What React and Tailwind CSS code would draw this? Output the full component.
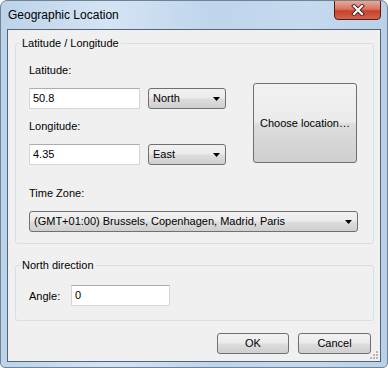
import React from 'react'

const font = "font-['Segoe_UI','Liberation_Sans',Arial,sans-serif]"
const btnBg = 'bg-[linear-gradient(#f2f2f2,#ebebeb_48%,#dddddd_52%,#cfcfcf)]'

const Arrow = () => (
  <svg width="7" height="4" viewBox="0 0 7 4" className="shrink-0">
    <path d="M0 0h7L3.5 4z" fill="#000" />
  </svg>
)

const TextBox = ({ value, className = '' }) => (
  <div className={`h-[21px] bg-white border border-[#d3d6db] border-t-[#abadb3] flex items-center px-[3px] ${className}`}>
    {value}
  </div>
)

const Combo = ({ value, className = '' }) => (
  <div className={`h-[21px] border border-[#707070] rounded-[3px] ${btnBg} flex items-center justify-between pl-[4px] pr-[5px] ${className}`}>
    <span>{value}</span>
    <Arrow />
  </div>
)

const Button = ({ children, className = '' }) => (
  <button className={`border border-[#707070] rounded-[3px] ${btnBg} text-black ${className}`}>{children}</button>
)

const Group = ({ title, className = '', children }) => (
  <fieldset className={`ml-[7px] w-[359px] border border-[#d5dfe5] rounded-[3px] px-[4px] ${className}`}>
    <legend className="px-[2px] leading-[14px]">{title}</legend>
    {children}
  </fieldset>
)

export default function App() {
  return (
    <div className={`${font} text-[11px] text-black w-[388px] h-[368px] flex flex-col rounded-t-[7px] rounded-b-[5px] border border-[#6f8296] bg-[linear-gradient(90deg,#bcd3ea,#d4e4f4_28%,#bfd5ec_55%,#c6daef_80%,#b9d0e8)] overflow-hidden`}>
      {/* Title bar */}
      <div className="h-[28px] flex justify-between shrink-0">
        <span className="pl-[7px] pt-[7px] leading-[14px] text-[12px]">Geographic Location</span>
        <div className="mr-[6px] -mt-px w-[47px] h-[20px] rounded-b-[4px] border border-[#5a1a10] bg-[linear-gradient(#eaa899,#d77561_45%,#c4432d_55%,#d4634a)] flex items-center justify-center">
          <svg width="14" height="12" viewBox="0 0 14 12">
            <path d="M3 2l8 8M11 2l-8 8" stroke="#4a2a28" strokeWidth="4" strokeLinecap="square" />
            <path d="M3 2l8 8M11 2l-8 8" stroke="#fff" strokeWidth="2" strokeLinecap="square" />
          </svg>
        </div>
      </div>

      {/* Client area */}
      <div className="relative mx-[6px] h-[333px] border border-[#54657a] bg-[#f0f0f0] flex flex-col">
        <Group title="Latitude / Longitude" className="mt-[6px] pb-[11px]">
          <div className="px-[9px] pt-[13px]">
            <div className="flex">
              <div className="flex flex-col w-[197px]">
                <span className="leading-[14px]">Latitude:</span>
                <div className="mt-[11px] flex gap-[8px]">
                  <TextBox value="50.8" className="w-[111px]" />
                  <Combo value="North" className="w-[78px]" />
                </div>
                <span className="mt-[10px] leading-[14px]">Longitude:</span>
                <div className="mt-[11px] flex gap-[8px]">
                  <TextBox value="4.35" className="w-[111px]" />
                  <Combo value="East" className="w-[78px]" />
                </div>
              </div>
              <Button className="ml-[27px] mt-[20px] w-[104px] h-[80px]">Choose location…</Button>
            </div>
            <div className="mt-[21px] leading-[14px]">Time Zone:</div>
            <Combo value="(GMT+01:00) Brussels, Copenhagen, Madrid, Paris" className="mt-[11px] w-[329px]" />
          </div>
        </Group>

        <Group title="North direction" className="mt-[14px] pb-[14px]">
          <div className="px-[9px] pt-[13px] flex items-center">
            <span className="w-[42px] leading-[14px]">Angle:</span>
            <TextBox value="0" className="w-[99px]" />
          </div>
        </Group>

        <div className="mt-[12px] flex justify-end gap-[9px] pr-[9px]">
          <Button className="w-[72px] h-[21px]">OK</Button>
          <Button className="w-[73px] h-[21px]">Cancel</Button>
        </div>

        {/* size grip */}
        <svg className="absolute right-[1px] bottom-[1px]" width="10" height="10" viewBox="0 0 10 10">
          {[[7, 1], [4, 4], [7, 4], [1, 7], [4, 7], [7, 7]].map(([x, y]) => (
            <rect key={`${x}-${y}`} x={x} y={y} width="2" height="2" fill="#b8b8b8" />
          ))}
        </svg>
      </div>
    </div>
  )
}
